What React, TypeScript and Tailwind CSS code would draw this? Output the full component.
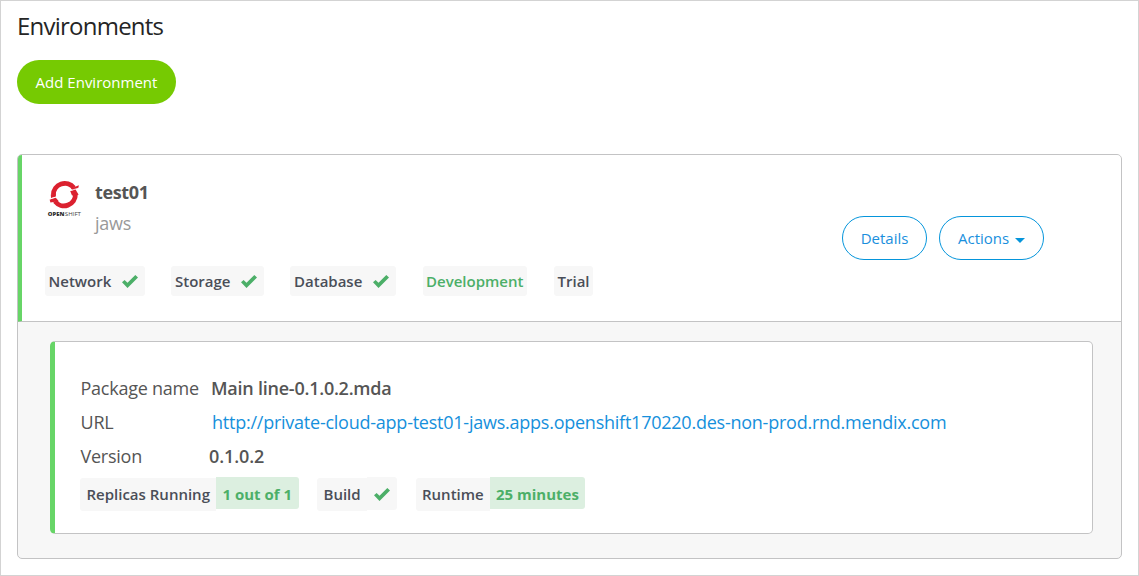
import React from "react";

function Check({ className = "" }: { className?: string }) {
  return (
    <svg className={className} width="18" height="15" viewBox="0 0 18 15" aria-hidden="true">
      <path d="M1 8.3 3.6 6 6.5 8.8 14.3 1 17 3.6 6.5 14Z" fill="#4caf68" />
    </svg>
  );
}

function OpenShiftLogo() {
  return (
    <svg width="36" height="38" viewBox="0 0 36 38" aria-label="OpenShift" className="shrink-0">
      <g fill="none" stroke="#db212f" strokeWidth="4.8">
        <path d="M6.4 14.8A11.4 11.4 0 0 1 26.8 7.8" />
        <path d="M28.4 14A11.4 11.4 0 0 1 8 21.4" />
      </g>
      <path d="M24 8.4 31.8 5.2 31.4 8 26 10.6Z" fill="#db212f" />
      <path d="M23.2 11 28.6 9.6 31.6 14.8 25 15.4Z" fill="#db212f" />
      <path d="M2.6 19.6 8.6 17.6 11.8 21.2 3.4 22.6Z" fill="#db212f" />
      <path d="M3.8 14.6 8.8 13.4 9 16.4 4 18Z" fill="#db212f" />
      <path d="M2.5 19.2 10 16.8M23 10.7 32 8" stroke="#fff" strokeWidth="0.8" />
      <text x="0.8" y="36" fontFamily="Open Sans, sans-serif" fontSize="5.9" fontWeight="800" fill="#2d2d2d" textLength="16.6" lengthAdjust="spacingAndGlyphs">OPEN</text>
      <text x="17.8" y="36" fontFamily="Open Sans, sans-serif" fontSize="5.9" fill="#444" textLength="16.2" lengthAdjust="spacingAndGlyphs">SHIFT</text>
    </svg>
  );
}

const chip = "flex h-[30px] items-center rounded-[3px] bg-[#f7f7f7] whitespace-nowrap";

export default function App() {
  return (
    <main className="h-[576px] w-[1139px] border border-[#d3d3d3] bg-white px-4 font-['Open_Sans',sans-serif] text-[#555]">
      <h1 className="h-[59px] pt-[9px] text-2xl leading-8 tracking-[-0.77px] text-[#252525]">Environments</h1>
      <button className="flex h-11 w-[159px] items-center justify-center rounded-full bg-[#76ca02] pt-px text-[15px] text-white">
        Add Environment
      </button>

      <section className="mt-[50px] h-[405px] w-[1105px] overflow-hidden rounded-[5px] border border-[#c3c3c4] bg-[#f7f7f7]">
        <header className="-ml-px -mt-px flex h-[168px] w-[1105px] justify-between rounded-t-[5px] border border-l-[5px] border-[#c3c3c4] border-l-[#67d567] bg-white pr-[77px]">
          <div>
            <div className="flex pl-[25px] pt-[24px]">
              <div className="pt-px"><OpenShiftLogo /></div>
              <div className="pl-3">
                <h2 className="text-lg leading-[26px] font-bold tracking-[-0.35px]">test01</h2>
                <p className="mt-[6px] text-lg leading-[24px] tracking-[-0.25px] text-[#999]">jaws</p>
              </div>
            </div>
            <div className="mt-[31px] flex pl-[23px] text-[15px] font-semibold text-[#4a4e58]">
              <span className={`${chip} w-[100px] pl-[3.5px]`}>Network<Check className="ml-[10px] mt-px" /></span>
              <span className={`${chip} ml-[26px] w-[93px] pl-1`}>Storage<Check className="ml-[10px] mt-px" /></span>
              <span className={`${chip} ml-[26px] w-[106px] pl-1`}>Database<Check className="ml-[10px] mt-px" /></span>
              <span className={`${chip} ml-[27px] w-[104px] pl-[3px] text-[#4caf68]`}>Development</span>
              <span className={`${chip} ml-[27px] w-[39px] pl-[3.5px]`}>Trial</span>
            </div>
          </div>
          <div className="flex gap-3 pt-[61px] text-[15px] text-[#1a8fdd]">
            <button className="h-11 w-[85px] rounded-[22px] border border-[#0595db]">Details</button>
            <button className="flex h-11 w-[105px] items-center rounded-[22px] border border-[#0595db] pl-[18px]">
              Actions
              <svg className="ml-[6px] mt-1" width="10" height="5" viewBox="0 0 10 5" aria-hidden="true">
                <path d="M0 0H10L5 5Z" fill="#0595db" />
              </svg>
            </button>
          </div>
        </header>

        <article className="ml-8 mt-[19px] h-[193px] w-[1043px] rounded-[5px] border border-l-[5px] border-[#c3c3c4] border-l-[#67d567] bg-white pt-[29px]">
          <dl className="pl-[25.5px] text-lg leading-[34px] tracking-[-0.24px]">
            <div className="flex">
              <dt className="w-[130.5px]">Package name</dt>
              <dd className="font-semibold">Main line-0.1.0.2.mda</dd>
            </div>
            <div className="flex">
              <dt className="w-[131.5px]">URL</dt>
              <dd className="text-[#1690dc]">
                <a href="#">http://private-cloud-app-test01-jaws.apps.openshift170220.des-non-prod.rnd.mendix.com</a>
              </dd>
            </div>
            <div className="flex">
              <dt className="w-[128.5px]">Version</dt>
              <dd className="font-semibold tracking-[-0.12px]">0.1.0.2</dd>
            </div>
          </dl>
          <div className="mt-[4px] flex items-start pl-[25px] text-[15px] font-semibold whitespace-nowrap text-[#4a4e58]">
            <span className="mt-px h-[33px] w-[136px] rounded-l-[3px] bg-[#f7f7f7] pl-[6.5px] leading-8">Replicas Running</span>
            <span className="h-8 w-[83px] rounded-r-[3px] bg-[#dcefe0] pl-[6.5px] leading-[34px] font-bold text-[#4caf68]">1 out of 1</span>
            <span className="ml-[18px] mt-px h-[33px] w-[50px] rounded-l-[3px] bg-[#f7f7f7] pl-[6.5px] leading-8">Build</span>
            <span className="flex h-[33px] w-[30px] items-center rounded-r-[3px] bg-[#f7f7f7] pl-[6px] pt-[2px]"><Check /></span>
            <span className="ml-[19px] mt-px h-[33px] w-[74px] rounded-l-[3px] bg-[#f7f7f7] pl-[6px] leading-8">Runtime</span>
            <span className="h-8 w-[95px] rounded-r-[3px] bg-[#dcefe0] pl-[6px] leading-[34px] font-bold text-[#4caf68]">25 minutes</span>
          </div>
        </article>
      </section>
    </main>
  );
}
